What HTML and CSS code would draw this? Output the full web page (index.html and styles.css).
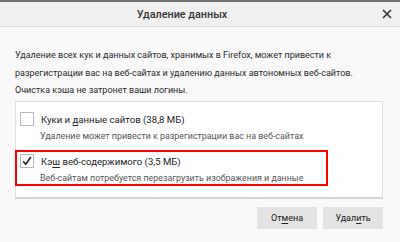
FILE: index.html
```html
<!DOCTYPE html>
<html lang="ru">
<head>
<meta charset="utf-8">
<link rel="stylesheet" href="styles.css">
</head>
<body>
<div class="topstrip"></div>
<header class="titlebar">
  <div class="title">Удаление данных</div>
  <button class="close" aria-label="Закрыть">
    <svg width="10" height="10" viewBox="0 0 10 10"><path d="M1 1 L9 9 M9 1 L1 9" stroke="#333" stroke-width="1.6" fill="none"/></svg>
  </button>
</header>
<main class="content">
  <p class="intro">Удаление всех кук и данных сайтов, хранимых в Firefox, может привести к<br>разрегистрации вас на веб-сайтах и удалению данных автономных веб-сайтов.<br>Очистка кэша не затронет ваши логины.</p>
  <div class="box">
    <div class="row">
      <span class="cb"></span>
      <div class="label">Куки и <u>д</u>анные сайтов (38,8 МБ)</div>
      <div class="desc">Удаление может привести к разрегистрации вас на веб-сайтах</div>
    </div>
    <div class="row">
      <span class="cb"><svg width="14" height="14" viewBox="0 0 14 14"><path d="M3.2 7.4 L5.8 10.2 L10.8 3" stroke="#222" stroke-width="1.6" fill="none"/></svg></span>
      <div class="label">Кэ<u>ш</u> веб-содержимого (3,5 МБ)</div>
      <div class="desc">Веб-сайтам потребуется перезагрузить изображения и данные</div>
    </div>
    <div class="highlight"></div>
  </div>
  <div class="actions">
    <button class="btn">От<u>м</u>ена</button>
    <button class="btn">Удал<u>и</u>ть</button>
  </div>
</main>
</body>
</html>
```
FILE: styles.css
```css
* { box-sizing: border-box; }
html, body { margin: 0; height: 100%; }
body {
  background: #f9f9f9;
  font-family: Roboto, "Liberation Sans", sans-serif;
  font-size: 9px;
  color: #2b2b2b;
}
.topstrip { height: 2px; background: #707070; }
.titlebar {
  height: 25px;
  background: #f0f0f0;
  border-bottom: 1px solid #dcdcdc;
  display: flex;
  align-items: center;
  position: relative;
}
.title {
  flex: 1;
  text-align: center;
  font-weight: 500;
  font-size: 10.8px;
  color: #333;
  padding-right: 18px;
}
.close {
  border: 0;
  background: none;
  padding: 0;
  width: 10px;
  height: 10px;
  margin-right: 8px;
  display: flex;
}
.content { padding: 0 17px 0 15px; }
.intro {
  margin: 0;
  padding-top: 20px;
  line-height: 17.5px;
  white-space: nowrap;
}
.box {
  position: relative;
  margin-top: 1px;
  background: #fff;
  border: 1px solid #dedede;
  border-bottom: 2px solid #d6d6d6;
  padding: 9px 0 10px 4px;
  display: flex;
  flex-direction: column;
  gap: 8px;
}
.row {
  display: grid;
  grid-template-columns: 14px 1fr;
  column-gap: 6px;
  line-height: 17px;
}
.cb {
  grid-row: 1;
  width: 14px;
  height: 14px;
  margin-top: 1px;
  background: #fff;
  border: 1px solid #b9b9b9;
  display: flex;
  align-items: center;
  justify-content: center;
}
.cb svg { flex: none; }
.label { grid-column: 2; grid-row: 1; color: #222; padding-left: 1px; font-size: 9.6px; }
.desc { grid-column: 2; color: #555; font-size: 8.9px; }
.highlight {
  position: absolute;
  left: -1px;
  top: 48px;
  width: 313px;
  height: 36px;
  border: 2px solid #f00;
}
.actions {
  display: flex;
  justify-content: flex-end;
  gap: 6px;
  margin-top: 8px;
}
.btn {
  width: 60px;
  height: 22px;
  border: 0;
  background: #e3e3e3;
  font-family: inherit;
  font-size: 9px;
  color: #222;
  padding: 0;
}
u { text-decoration-thickness: 1px; text-underline-offset: 2px; }
```
